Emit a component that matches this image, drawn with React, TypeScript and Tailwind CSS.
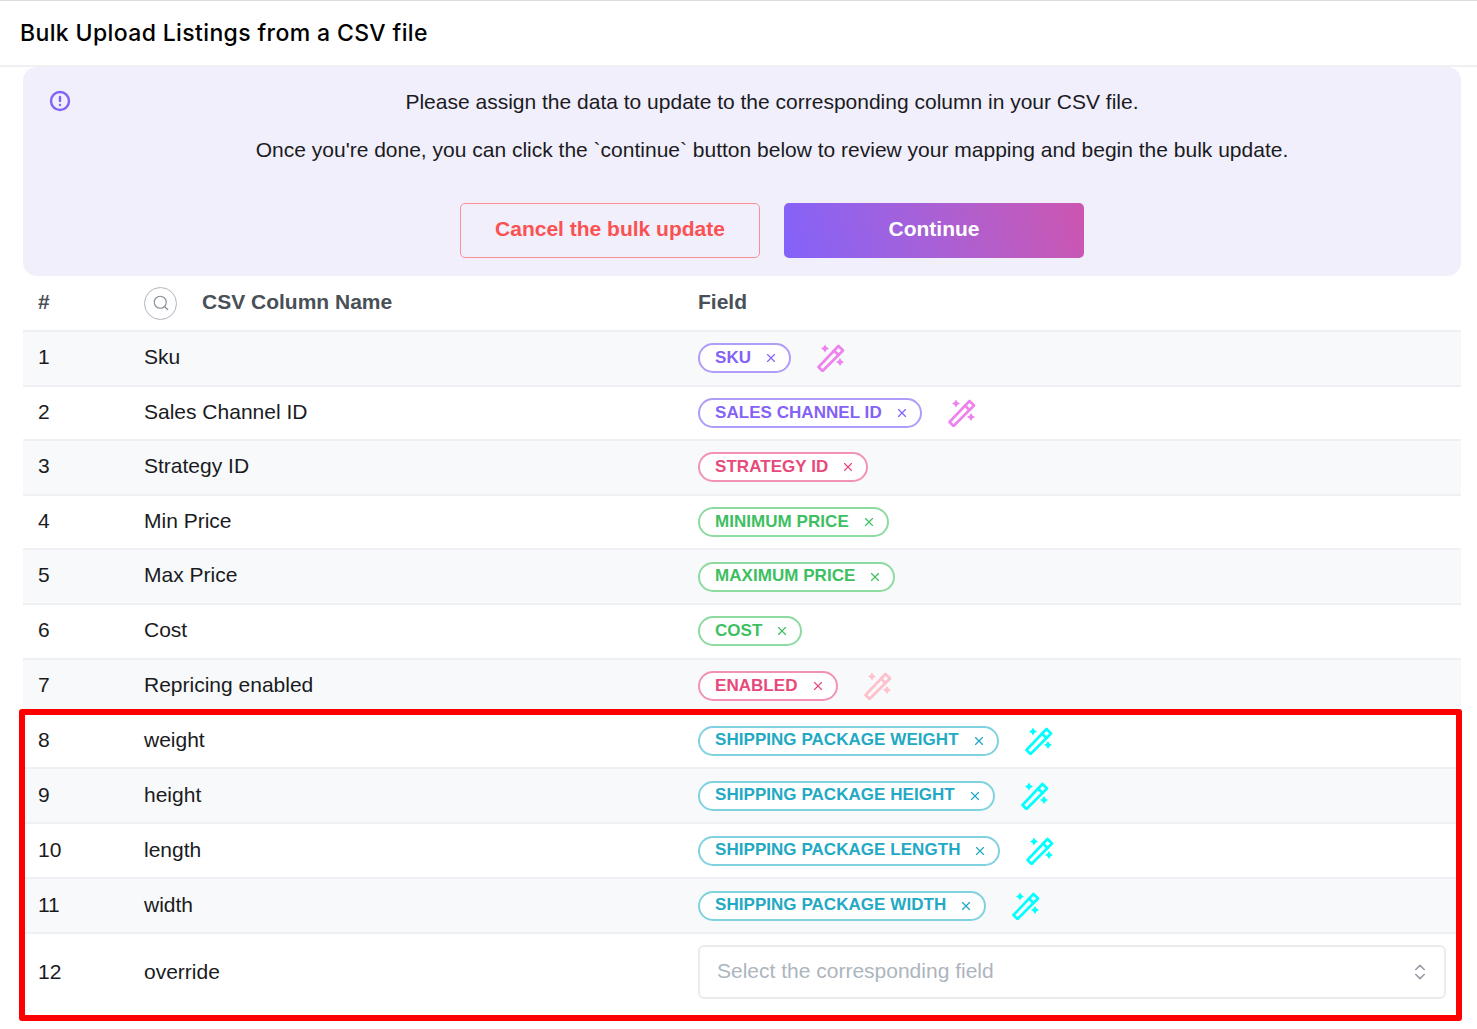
import React from 'react';
import { ChevronsUpDown, Search, X } from 'lucide-react';

type Tone = 'purple' | 'pink' | 'green' | 'cyan';

interface Row {
  name: string;
  field?: string;
  tone?: Tone;
  wand?: boolean;
}

const rows: Row[] = [
  { name: 'Sku', field: 'SKU', tone: 'purple', wand: true },
  { name: 'Sales Channel ID', field: 'SALES CHANNEL ID', tone: 'purple', wand: true },
  { name: 'Strategy ID', field: 'STRATEGY ID', tone: 'pink' },
  { name: 'Min Price', field: 'MINIMUM PRICE', tone: 'green' },
  { name: 'Max Price', field: 'MAXIMUM PRICE', tone: 'green' },
  { name: 'Cost', field: 'COST', tone: 'green' },
  { name: 'Repricing enabled', field: 'ENABLED', tone: 'pink', wand: true },
  { name: 'weight', field: 'SHIPPING PACKAGE WEIGHT', tone: 'cyan', wand: true },
  { name: 'height', field: 'SHIPPING PACKAGE HEIGHT', tone: 'cyan', wand: true },
  { name: 'length', field: 'SHIPPING PACKAGE LENGTH', tone: 'cyan', wand: true },
  { name: 'width', field: 'SHIPPING PACKAGE WIDTH', tone: 'cyan', wand: true },
  { name: 'override' },
];

const chipStyles: Record<Tone, string> = {
  purple: 'text-[#8462f6] border-[#b09cf9]',
  pink: 'text-[#e8497b] border-[#f292b4]',
  green: 'text-[#3dbf62] border-[#8ddba0]',
  cyan: 'text-[#22a9c4] border-[#80d2e0]',
};

const wandStyles: Record<Tone, string> = {
  purple: 'text-[#ee82ee]',
  pink: 'text-[#ffc0cb]',
  green: 'text-[#3dbf62]',
  cyan: 'text-[#00ffff]',
};

const Wand = ({ className }: { className: string }) => (
  <svg viewBox="0 0 28 28" className={`w-[28px] h-[28px] ${className}`} fill="none" stroke="currentColor" strokeWidth="2.6" strokeLinejoin="round" strokeLinecap="round">
    <path d="M1.5 23l4 4l20.5 -20.5l-4.5 -4.5z" />
    <path d="M17 6.5l4.5 4.5" />
    <path fill="currentColor" stroke="none" d="M8 0.5l1.5 2.5l2.5 1.5l-2.5 1.5l-1.5 2.5l-1.5 -2.5l-2.5 -1.5l2.5 -1.5z" />
    <path fill="currentColor" stroke="none" d="M23 14l1.5 2.5l2.5 1.5l-2.5 1.5l-1.5 2.5l-1.5 -2.5l-2.5 -1.5l2.5 -1.5z" />
  </svg>
);

const App = () => {
  return (
    <div className="relative min-h-[1029px] bg-white font-['Liberation_Sans',Arial,sans-serif] text-[#1a1b1e] overflow-hidden">
      <header className="h-[67px] border-t border-t-[#dcdcdc] border-b-2 border-b-[#f0f0f2] flex items-center pl-5">
        <h1 className="font-['Inter',sans-serif] font-medium text-[23px] tracking-[0.37px] text-black">Bulk Upload Listings from a CSV file</h1>
      </header>

      <div className="ml-[23px] mr-4">
        <section className="h-[209px] bg-[#f1effc] rounded-[14px] relative pt-[23px] pl-[60px]">
          <svg viewBox="0 0 24 24" className="absolute left-[25px] top-[22px] w-[24px] h-[24px] text-[#8462f6]" fill="none" stroke="currentColor" strokeWidth="2.4" strokeLinecap="round">
            <circle cx="12" cy="12" r="9" />
            <path d="M12 8v4" />
            <path d="M12 16h.01" />
          </svg>
          <p className="text-center text-[21px] leading-[24px] text-[#1a1b1e]">Please assign the data to update to the corresponding column in your CSV file.</p>
          <p className="text-center text-[21px] leading-[24px] mt-6 text-[#1a1b1e]">Once you're done, you can click the `continue` button below to review your mapping and begin the bulk update.</p>
          <div className="flex justify-center gap-6 mt-[41px]">
            <button className="w-[300px] h-[55px] rounded-[5px] border border-[#fb8f96] text-[#fa5252] font-bold text-[21px] pb-[3px]">Cancel the bulk update</button>
            <button className="w-[300px] h-[55px] rounded-[5px] bg-linear-75 from-[#8362fa] to-[#cc55b0] text-white font-bold text-[21px] pb-[3px]">Continue</button>
          </div>
        </section>

        <div className="grid grid-cols-[121px_554px_1fr] items-center h-[56px] border-b-2 border-[#eef0f3] text-[#495057] font-bold text-[21px]">
          <span className="pl-[15px] pb-[2px]">#</span>
          <div className="flex items-center gap-[25px]">
            <span className="w-[33px] h-[33px] rounded-full border border-[#adb5bd] flex items-center justify-center">
              <Search size={18} strokeWidth={1.5} className="text-[#868e96]" />
            </span>
            <span className="pb-[2px]">CSV Column Name</span>
          </div>
          <span className="pb-[2px]">Field</span>
        </div>

        {rows.map((row, i) => {
          const rowBg = i % 2 === 0 ? 'bg-[#f8f9fa]' : 'bg-white';
          const last = i === rows.length - 1;
          const rowHeight = last ? 'h-[76px]' : i >= 7 ? 'h-[55px] border-b-2 border-[#eef0f3]' : 'h-[54.6px] border-b-2 border-[#eef0f3]';
          return (
            <div key={row.name} className={`grid grid-cols-[121px_554px_1fr] items-center text-[21px] ${rowBg} ${rowHeight}`}>
              <span className={`pl-[15px] ${i >= 7 ? 'pb-[1px]' : 'pb-[3px]'}`}>{i + 1}</span>
              <span className={i >= 7 ? 'pb-[1px]' : 'pb-[3px]'}>{row.name}</span>
              {row.field && row.tone ? (
                <div className="flex items-center gap-[26px]">
                  <span className={`h-[30px] rounded-full border-2 bg-white pl-[15px] pr-[11px] flex items-center gap-[13px] font-bold text-[17px] tracking-[0.05px] ${chipStyles[row.tone]}`}>
                    <span className="pb-[1px]">{row.field}</span>
                    <X size={14} strokeWidth={2} />
                  </span>
                  {row.wand && <Wand className={wandStyles[row.tone]} />}
                </div>
              ) : (
                <div className="mr-[15px] h-[54px] rounded-[6px] border-2 border-[#e9ecef] bg-white flex items-center justify-between pl-[17px] pr-[14px] text-[#adb5bd]">
                  <span className="pb-[2px]">Select the corresponding field</span>
                  <ChevronsUpDown size={20} strokeWidth={2} className="text-[#979ea6]" />
                </div>
              )}
            </div>
          );
        })}
      </div>

      <div className="absolute left-[19px] top-[709px] w-[1443px] h-[312px] border-[6px] border-[#ff0000] rounded-[3px] pointer-events-none" />
    </div>
  );
};

export default App;
